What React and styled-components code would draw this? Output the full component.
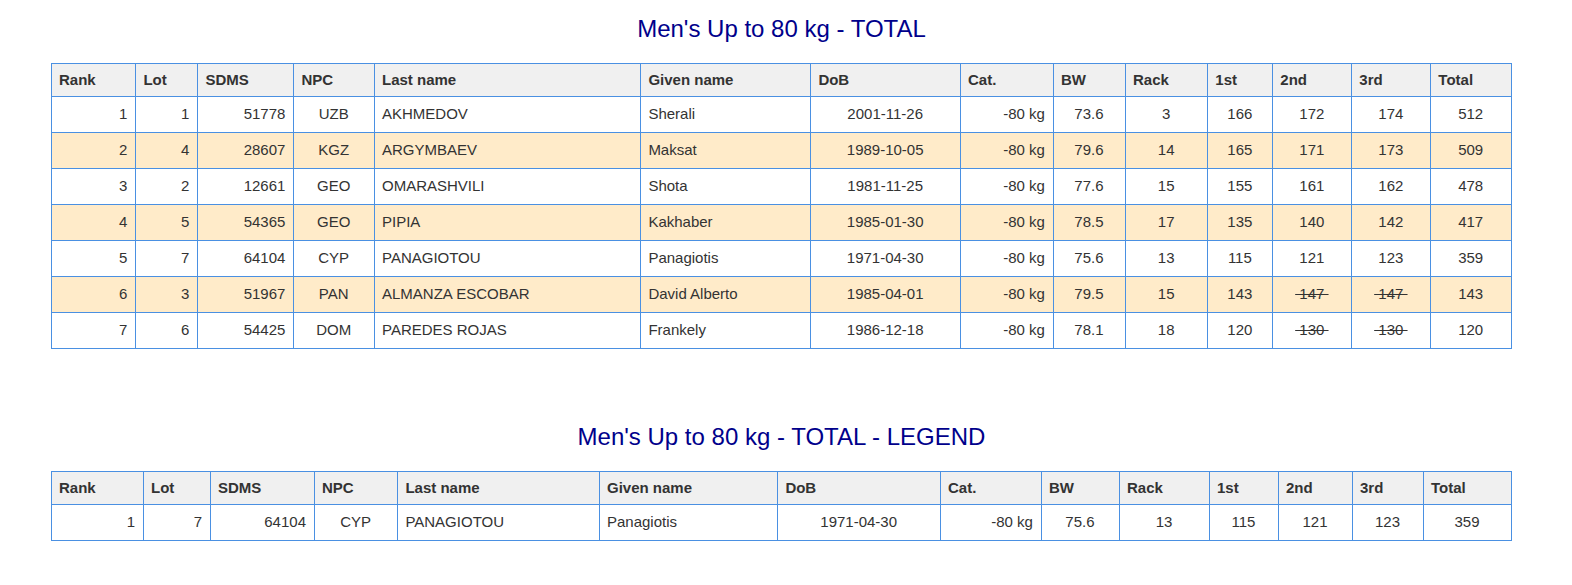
import styled, { createGlobalStyle } from "styled-components";

const GlobalStyle = createGlobalStyle`
  body {
    margin: 0;
    background: #fff;
    font-family: "Liberation Sans", Arial, sans-serif;
    color: #333;
  }
`;

const columns = [
  { label: "Rank", align: "right" },
  { label: "Lot", align: "right" },
  { label: "SDMS", align: "right" },
  { label: "NPC", align: "center" },
  { label: "Last name", align: "left" },
  { label: "Given name", align: "left" },
  { label: "DoB", align: "center" },
  { label: "Cat.", align: "right" },
  { label: "BW", align: "center" },
  { label: "Rack", align: "center" },
  { label: "1st", align: "center" },
  { label: "2nd", align: "center" },
  { label: "3rd", align: "center" },
  { label: "Total", align: "center" },
];

const results = [
  [1, 1, 51778, "UZB", "AKHMEDOV", "Sherali", "2001-11-26", "-80 kg", "73.6", 3, 166, 172, 174, 512],
  [2, 4, 28607, "KGZ", "ARGYMBAEV", "Maksat", "1989-10-05", "-80 kg", "79.6", 14, 165, 171, 173, 509],
  [3, 2, 12661, "GEO", "OMARASHVILI", "Shota", "1981-11-25", "-80 kg", "77.6", 15, 155, 161, 162, 478],
  [4, 5, 54365, "GEO", "PIPIA", "Kakhaber", "1985-01-30", "-80 kg", "78.5", 17, 135, 140, 142, 417],
  [5, 7, 64104, "CYP", "PANAGIOTOU", "Panagiotis", "1971-04-30", "-80 kg", "75.6", 13, 115, 121, 123, 359],
  [6, 3, 51967, "PAN", "ALMANZA ESCOBAR", "David Alberto", "1985-04-01", "-80 kg", "79.5", 15, 143, -147, -147, 143],
  [7, 6, 54425, "DOM", "PAREDES ROJAS", "Frankely", "1986-12-18", "-80 kg", "78.1", 18, 120, -130, -130, 120],
];

const legend = [
  [1, 7, 64104, "CYP", "PANAGIOTOU", "Panagiotis", "1971-04-30", "-80 kg", "75.6", 13, 115, 121, 123, 359],
];

const resultWidths = [84.4, 62, 96, 80.6, 266.4, 170, 149.6, 93, 72, 82.4, 65, 79, 79, 80.6];
const legendWidths = [92, 67, 104, 83.4, 201.6, 178.4, 162.6, 101, 78, 90, 69, 74, 71, 88];

const Page = styled.main`
  padding: 0 60px 40px 51px;
`;

const Section = styled.section`
  padding-top: 15px;
  & + & {
    margin-top: 59px;
  }
`;

const Title = styled.h2`
  margin: 0 0 20px;
  font-size: 24px;
  line-height: 28px;
  font-weight: normal;
  text-align: center;
  color: #00008b;
`;

const Table = styled.table`
  width: 100%;
  table-layout: fixed;
  border-collapse: collapse;
  font-size: 15px;
  border: 1px solid #4a90e2;
`;

const Th = styled.th`
  border: 1px solid #4a90e2;
  background: #f0f0f0;
  padding: 6px 8px 6px 7px;
  line-height: 20px;
  font-weight: bold;
  text-align: left;
  color: #333;
`;

const Row = styled.tr`
  background: ${(p) => (p.$striped ? "#ffebc9" : "#fff")};
`;

const Td = styled.td`
  border: 1px solid #4a90e2;
  padding: 7px 8px 9px 7px;
  line-height: 19px;
  text-align: ${(p) => p.$align};
  white-space: nowrap;
`;

const Failed = styled.s`
  text-decoration-thickness: 1px;
`;

const renderValue = (v, i) => {
  if (i >= 10 && i <= 12 && typeof v === "number" && v < 0) {
    return <Failed>{`\u00a0${-v}\u00a0`}</Failed>;
  }
  return v;
};

const ResultTable = ({ title, rows, widths }) => (
  <Section>
    <Title>{title}</Title>
    <Table>
      <colgroup>
        {widths.map((w, i) => (
          <col key={i} style={{ width: w }} />
        ))}
      </colgroup>
      <thead>
        <tr>
          {columns.map((c) => (
            <Th key={c.label}>{c.label}</Th>
          ))}
        </tr>
      </thead>
      <tbody>
        {rows.map((r, ri) => (
          <Row key={ri} $striped={ri % 2 === 1}>
            {r.map((v, i) => (
              <Td key={i} $align={columns[i].align}>
                {renderValue(v, i)}
              </Td>
            ))}
          </Row>
        ))}
      </tbody>
    </Table>
  </Section>
);

export default function App() {
  return (
    <>
      <GlobalStyle />
      <Page>
        <ResultTable title="Men's Up to 80 kg - TOTAL" rows={results} widths={resultWidths} />
        <ResultTable title="Men's Up to 80 kg - TOTAL - LEGEND" rows={legend} widths={legendWidths} />
      </Page>
    </>
  );
}
